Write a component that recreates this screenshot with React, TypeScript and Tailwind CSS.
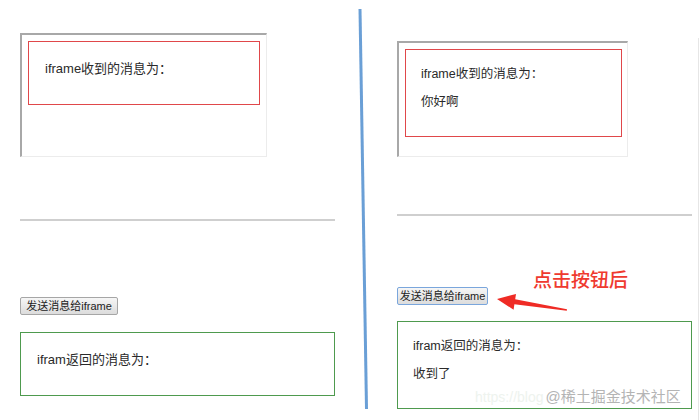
const font = { fontFamily: '"Liberation Sans", "Noto Sans CJK SC", sans-serif' };

function SendButton({ focused = false, width }: { focused?: boolean; width: string }) {
  return (
    <button
      className={`${width} h-[18px] flex items-center justify-center rounded-[2px] border bg-gradient-to-b from-[#f6f6f6] to-[#dcdcdc] text-[11px] leading-none text-[#222] ${
        focused ? 'border-[#7aa6dc]' : 'border-[#a6a6a6]'
      }`}
    >
      发送消息给iframe
    </button>
  );
}

function FakeIframe({ w, h, children }: { w: string; h: string; children: React.ReactNode }) {
  return (
    <div
      className={`${w} ${h} border-t-2 border-l-2 border-r border-b border-t-[#a8a8a8] border-l-[#a8a8a8] border-r-[#ececec] border-b-[#ececec] p-[6px]`}
    >
      {children}
    </div>
  );
}

export default function App() {
  return (
    <div className="relative w-[700px] h-[420px] overflow-hidden bg-white text-[#2a2a2a]" style={font}>
      <div className="flex">
        {/* 左：点击前 */}
        <div className="w-[350px] pl-[20px] pt-[33px]">
          <FakeIframe w="w-[247px]" h="h-[124px]">
            <div className="w-[232px] h-[64px] border border-[#e0474a] pl-[16px] pt-[17px] text-[13px] leading-[20px]">
              iframe收到的消息为：
            </div>
          </FakeIframe>
          <div className="w-[315px] h-[2px] bg-[#cfcfcf] mt-[62px]" />
          <div className="mt-[76px]">
            <SendButton width="w-[98px]" />
          </div>
          <div className="w-[315px] h-[64px] mt-[17px] border border-[#4e9a4e] pl-[16px] pt-[17px] text-[13px] leading-[20px]">
            ifram返回的消息为：
          </div>
        </div>

        {/* 右：点击后 */}
        <div className="flex-1 pl-[47px] pt-[41px]">
          <FakeIframe w="w-[231px]" h="h-[116px]">
            <div className="w-[217px] h-[88px] border border-[#e0474a] pl-[15px] pt-[15px] text-[12.5px] leading-[18px]">
              <div>iframe收到的消息为：</div>
              <div className="mt-[10px]">你好啊</div>
            </div>
          </FakeIframe>
          <div className="w-[295px] h-[2px] bg-[#cfcfcf] mt-[57px]" />
          <div className="mt-[71px]">
            <SendButton focused width="w-[91px]" />
          </div>
          <div className="w-[295px] h-[88px] mt-[16px] border border-[#4e9a4e] pl-[15px] pt-[15px] text-[12.5px] leading-[18px]">
            <div>ifram返回的消息为：</div>
            <div className="mt-[10px]">收到了</div>
          </div>
        </div>
      </div>

      {/* 标注 */}
      <svg className="absolute inset-0 pointer-events-none" width="700" height="420" viewBox="0 0 700 420">
        <line x1="360" y1="9" x2="366.5" y2="409" stroke="#6a9fd6" strokeWidth="3" />
        <polygon
          points="497,299 516,293.9 515.2,299.3 567,309.3 566.8,310.8 514.4,304.3 513.6,309.7"
          fill="#ef2b25"
        />
        <line x1="698.5" y1="38" x2="698.5" y2="420" stroke="#e6e6e6" strokeWidth="1" />
      </svg>
      <div className="absolute left-[533px] top-[268px] text-[19px] leading-[26px] font-medium text-[#ef3a2f]">
        点击按钮后
      </div>
      <div className="absolute left-[475px] top-[388px] flex items-center text-[15px] leading-[18px]">
        <span className="text-[#eef3ee] text-[14px]">https://blog</span>
        <span className="text-[#b4b4b4] ml-[2px]">@稀土掘金技术社区</span>
      </div>
    </div>
  );
}
